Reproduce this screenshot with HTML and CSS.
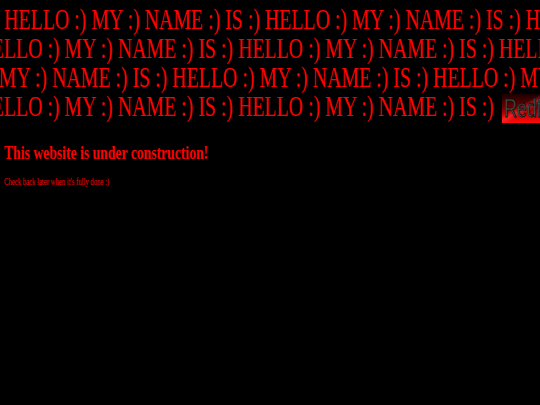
FILE: index.html
```html
<!DOCTYPE html>
<html>
<head>
<meta charset="utf-8">
<title>Under construction</title>
<link rel="stylesheet" href="styles.css">
</head>
<body>
<div class="page">
  <div class="rows">
    <div class="row row1">HELLO :) MY :) NAME :) IS :) HELLO :) MY :) NAME :) IS :) HELLO :) MY :) NAME :) IS :) </div>
    <div class="row row2">HELLO :) MY :) NAME :) IS :) HELLO :) MY :) NAME :) IS :) HELLO :) MY :) NAME :) IS :) </div>
    <div class="row row3">HELLO :) MY :) NAME :) IS :) HELLO :) MY :) NAME :) IS :) HELLO :) MY :) NAME :) IS :) </div>
    <div class="row row4">HELLO :) MY :) NAME :) IS :) HELLO :) MY :) NAME :) IS :) <span class="badge">Redfox</span></div>
  </div>
  <h1 class="title">This website is under construction!</h1>
  <p class="note">Check back later when it's fully done :)</p>
</div>
</body>
</html>
```
FILE: styles.css
```css
html, body {
  margin: 0;
  padding: 0;
  background: #000;
  overflow: hidden;
  height: 100%;
}
.page {
  width: 750px;
  transform: scaleX(0.72);
  transform-origin: 0 0;
  font-family: "Liberation Serif", "Times New Roman", serif;
  color: #f00;
}
.rows {
  padding-top: 5px;
  width: 805px;
  transform: scaleX(0.932);
  transform-origin: 0 0;
}
.row {
  height: 29px;
  font-size: 29.6px;
  line-height: 29px;
  white-space: nowrap;
}
.row1 { text-indent: 6px; }
.row2 { text-indent: -34px; }
.row3 { text-indent: -132px; }
.row4 { text-indent: -34px; }
.badge {
  display: inline-block;
  vertical-align: top;
  margin-top: 2px;
  margin-left: 5px;
  height: 29px;
  width: 110px;
  text-indent: 0;
  font-family: "Liberation Sans", Arial, sans-serif;
  font-size: 26.5px;
  line-height: 29px;
  padding-left: 3px;
  color: #555;
  -webkit-text-stroke: 1px #111;
  background:
    linear-gradient(160deg, transparent 30%, rgba(255,60,60,0.55) 38%, transparent 46%),
    linear-gradient(to bottom, #1a0000 0%, #6a0000 45%, #e00000 80%, #ff0a0a 100%);
}
.title {
  margin: 22px 0 0 5.5px;
  font-size: 19px;
  line-height: 19px;
  font-weight: bold;
}
.note {
  margin: 15px 0 0 5.5px;
  font-size: 9.3px;
  line-height: 10px;
}
```
